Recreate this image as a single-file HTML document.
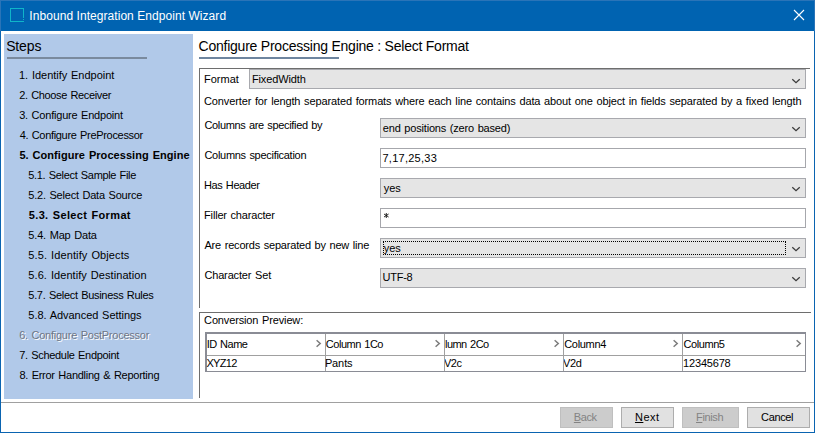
<!DOCTYPE html>
<html><head><meta charset="utf-8">
<style>
*{margin:0;padding:0;box-sizing:border-box}
html,body{width:815px;height:433px;overflow:hidden;background:#fff}
body{position:relative;font-family:"Liberation Sans",sans-serif;font-size:11px;color:#000}
.a{position:absolute}
.t{position:absolute;white-space:nowrap}
#tb{left:0;top:0;width:815px;height:31px;background:#0063b1}
#icon{left:10px;top:8px;width:14px;height:14px;border:1px solid #0fb5c9}
#close{left:793px;top:9px;width:12px;height:12px}
#steps{left:4px;top:34px;width:189px;height:365px;background:#b1c9e9}
#stepsu{left:7px;top:57px;width:140px;height:2px;background:#7a8a9e}
#phu{left:199px;top:57px;width:140px;height:2px;background:#6e859f}
.box{position:absolute;border-top:1px solid #6e6e6e;border-left:1px solid #6e6e6e}
.cb{position:absolute;height:20px;background:#e5e5e5;border:1px solid #a8a9ae}
.tx{position:absolute;height:20px;background:#fff;border:1px solid #a6a7ac}
.chev{position:absolute}
.hchev{position:absolute}
#tbl{left:205px;top:332px;width:601px;height:40px;border:1px solid #8a8c95;border-top:2px solid #8a8c95;border-left:2px solid #8a8c95}
.vl{position:absolute;width:1px;background:#a0a0a0}
.hl{position:absolute;height:1px;background:#a0a0a0}
.btn{position:absolute;top:407px;height:21px;background:#e1e1e1;border:1px solid #adadad}
.btn.dis{background:#cccccc;border-color:#bfbfbf}
u{text-decoration:underline;text-decoration-thickness:1px;text-underline-offset:1px}
.clip{position:absolute;overflow:hidden}

</style></head><body>
<div id="tb" class="a"></div>
<div class="a" style="left:0;top:0;width:1px;height:433px;background:#0a64b1"></div>
<div class="a" style="left:814px;top:0;width:1px;height:433px;background:#0a64b1"></div>
<div class="a" style="left:0;top:432px;width:815px;height:1px;background:#0a64b1"></div>
<div class="a" style="left:0;top:0;width:815px;height:1px;background:#2a74b8"></div>
<div class="a" style="left:0;top:0;width:1px;height:31px;background:#2a74b8"></div>
<div class="a" style="left:814px;top:0;width:1px;height:31px;background:#2a74b8"></div>
<svg class="a" style="left:10px;top:8px" width="14" height="14"><g fill="#0fb5c9"><rect x="0" y="0" width="14" height="1"/><rect x="0" y="0" width="1" height="14"/><rect x="0" y="13" width="14" height="1"/><rect x="13" y="0" width="1" height="10"/><rect x="13" y="11" width="1" height="1"/></g></svg>
<svg id="close" class="a" viewBox="0 0 12 12"><path d="M1 1L11 11M11 1L1 11" stroke="#fff" stroke-width="1.1"/></svg>

<div id="steps" class="a"></div>
<div id="stepsu" class="a"></div>
<div id="phu" class="a"></div>

<div class="box" style="left:199px;top:68px;width:611px;height:240px"></div>
<div class="cb" style="left:249px;top:69px;width:557px"></div>
<div class="cb" style="left:380px;top:118px;width:426px"></div>
<div class="tx" style="left:380px;top:148px;width:426px"></div>
<div class="cb" style="left:380px;top:178px;width:426px"></div>
<div class="tx" style="left:380px;top:208px;width:426px"></div>
<svg class="a" style="left:383px;top:212px" width="7" height="7" viewBox="0 0 7 7"><path d="M1 2L5.6 5M5.6 2L1 5M3.3 1V6" stroke="#111" stroke-width="0.9" fill="none"/></svg>
<div class="cb" style="left:380px;top:238px;width:426px"></div>
<div class="a" style="left:383px;top:241px;width:403px;height:14px;border:1px dotted #000"></div>
<div class="cb" style="left:380px;top:268px;width:426px"></div>

<svg class="chev" style="left:791px;top:77px" width="10" height="7" viewBox="0 0 10 7"><path d="M1.3 2.2L5 5.6L8.7 2.2" fill="none" stroke="#3a3a3a" stroke-width="1.25"/></svg>
<svg class="chev" style="left:791px;top:125px" width="10" height="7" viewBox="0 0 10 7"><path d="M1.3 2.2L5 5.6L8.7 2.2" fill="none" stroke="#3a3a3a" stroke-width="1.25"/></svg>
<svg class="chev" style="left:791px;top:185px" width="10" height="7" viewBox="0 0 10 7"><path d="M1.3 2.2L5 5.6L8.7 2.2" fill="none" stroke="#3a3a3a" stroke-width="1.25"/></svg>
<svg class="chev" style="left:791px;top:245px" width="10" height="7" viewBox="0 0 10 7"><path d="M1.3 2.2L5 5.6L8.7 2.2" fill="none" stroke="#3a3a3a" stroke-width="1.25"/></svg>
<svg class="chev" style="left:791px;top:275px" width="10" height="7" viewBox="0 0 10 7"><path d="M1.3 2.2L5 5.6L8.7 2.2" fill="none" stroke="#3a3a3a" stroke-width="1.25"/></svg>

<div class="box" style="left:199px;top:312px;width:612px;height:86px"></div>

<div id="tbl" class="a"></div>
<div class="hl" style="left:207px;top:355px;width:598px"></div>
<div class="vl" style="left:325px;top:334px;height:37px"></div>
<div class="vl" style="left:444px;top:334px;height:37px"></div>
<div class="vl" style="left:563px;top:334px;height:37px"></div>
<div class="vl" style="left:682px;top:334px;height:37px"></div>
<svg class="hchev" style="left:315px;top:339px" width="7" height="9" viewBox="0 0 7 9"><path d="M1.6 1.3L5.2 4.5L1.6 7.7" fill="none" stroke="#7c7c7c" stroke-width="1.5"/></svg>
<svg class="hchev" style="left:434px;top:339px" width="7" height="9" viewBox="0 0 7 9"><path d="M1.6 1.3L5.2 4.5L1.6 7.7" fill="none" stroke="#7c7c7c" stroke-width="1.5"/></svg>
<svg class="hchev" style="left:553px;top:339px" width="7" height="9" viewBox="0 0 7 9"><path d="M1.6 1.3L5.2 4.5L1.6 7.7" fill="none" stroke="#7c7c7c" stroke-width="1.5"/></svg>
<svg class="hchev" style="left:672px;top:339px" width="7" height="9" viewBox="0 0 7 9"><path d="M1.6 1.3L5.2 4.5L1.6 7.7" fill="none" stroke="#7c7c7c" stroke-width="1.5"/></svg>
<svg class="hchev" style="left:795px;top:339px" width="7" height="9" viewBox="0 0 7 9"><path d="M1.6 1.3L5.2 4.5L1.6 7.7" fill="none" stroke="#7c7c7c" stroke-width="1.5"/></svg>
<div class="clip" style="left:445px;top:356px;width:118px;height:15px"><div class="t" style="left:-1px;top:2px;font-size:11px;line-height:11px;letter-spacing:-0.5px">V2c</div></div>
<div class="clip" style="left:564px;top:356px;width:118px;height:15px"><div class="t" style="left:-1px;top:2px;font-size:11px;line-height:11px;letter-spacing:-0.4px">V2d</div></div>

<div class="a" style="left:1px;top:402px;width:813px;height:1px;background:#a0a0a0"></div>
<div class="btn dis" style="left:560px;width:53px"></div>
<div class="btn" style="left:621px;width:53px"></div>
<div class="btn dis" style="left:682px;width:57px"></div>
<div class="btn" style="left:747px;width:63px"></div>

<div id="ttl" class="t" style="left:29.36px;top:10px;font-size:12px;line-height:12px;font-weight:normal;color:#fff;letter-spacing:0.056px;word-spacing:0px;">Inbound Integration Endpoint Wizard</div>
<div id="stepsh" class="t" style="left:6.14px;top:39px;font-size:14px;line-height:14px;font-weight:normal;color:#000;letter-spacing:-0.126px;word-spacing:0px;">Steps</div>
<div id="s1" class="t" style="left:18.95px;top:70px;font-size:11px;line-height:11px;font-weight:normal;color:#000;letter-spacing:-0.021px;word-spacing:0.8px;">1. Identify Endpoint</div>
<div id="s2" class="t" style="left:19.26px;top:90px;font-size:11px;line-height:11px;font-weight:normal;color:#000;letter-spacing:-0.355px;word-spacing:0.8px;">2. Choose Receiver</div>
<div id="s3" class="t" style="left:19.15px;top:110px;font-size:11px;line-height:11px;font-weight:normal;color:#000;letter-spacing:-0.204px;word-spacing:0.8px;">3. Configure Endpoint</div>
<div id="s4" class="t" style="left:19.65px;top:130px;font-size:11px;line-height:11px;font-weight:normal;color:#000;letter-spacing:-0.319px;word-spacing:0.8px;">4. Configure PreProcessor</div>
<div id="s5" class="t" style="left:19.38px;top:150px;font-size:11px;line-height:11px;font-weight:bold;color:#000;letter-spacing:0.053px;word-spacing:0.8px;">5. Configure Processing Engine</div>
<div id="s51" class="t" style="left:28.33px;top:170px;font-size:11px;line-height:11px;font-weight:normal;color:#000;letter-spacing:-0.342px;word-spacing:0.8px;">5.1. Select Sample File</div>
<div id="s52" class="t" style="left:28.33px;top:190px;font-size:11px;line-height:11px;font-weight:normal;color:#000;letter-spacing:-0.208px;word-spacing:0.8px;">5.2. Select Data Source</div>
<div id="s53" class="t" style="left:28.76px;top:210px;font-size:11px;line-height:11px;font-weight:bold;color:#000;letter-spacing:0.354px;word-spacing:0.8px;">5.3. Select Format</div>
<div id="s54" class="t" style="left:28.33px;top:230px;font-size:11px;line-height:11px;font-weight:normal;color:#000;letter-spacing:-0.173px;word-spacing:0.8px;">5.4. Map Data</div>
<div id="s55" class="t" style="left:28.33px;top:250px;font-size:11px;line-height:11px;font-weight:normal;color:#000;letter-spacing:0.109px;word-spacing:0.8px;">5.5. Identify Objects</div>
<div id="s56" class="t" style="left:28.33px;top:270px;font-size:11px;line-height:11px;font-weight:normal;color:#000;letter-spacing:0.070px;word-spacing:0.8px;">5.6. Identify Destination</div>
<div id="s57" class="t" style="left:28.33px;top:290px;font-size:11px;line-height:11px;font-weight:normal;color:#000;letter-spacing:-0.314px;word-spacing:0.8px;">5.7. Select Business Rules</div>
<div id="s58" class="t" style="left:28.33px;top:310px;font-size:11px;line-height:11px;font-weight:normal;color:#000;letter-spacing:-0.044px;word-spacing:0.8px;">5.8. Advanced Settings</div>
<div id="s6" class="t" style="left:19.17px;top:330px;font-size:11px;line-height:11px;font-weight:normal;color:#6e7585;letter-spacing:-0.236px;word-spacing:0.8px;text-shadow:1px 1px 0 #fff;">6. Configure PostProcessor</div>
<div id="s7" class="t" style="left:19.22px;top:350px;font-size:11px;line-height:11px;font-weight:normal;color:#000;letter-spacing:-0.325px;word-spacing:0.8px;">7. Schedule Endpoint</div>
<div id="s8" class="t" style="left:19.40px;top:370px;font-size:11px;line-height:11px;font-weight:normal;color:#000;letter-spacing:-0.264px;word-spacing:0.8px;">8. Error Handling &amp; Reporting</div>
<div id="ph" class="t" style="left:198.54px;top:39px;font-size:14px;line-height:14px;font-weight:normal;color:#000;letter-spacing:-0.231px;word-spacing:0px;">Configure Processing Engine : Select Format</div>
<div id="lfmt" class="t" style="left:203.89px;top:74px;font-size:11px;line-height:11px;font-weight:normal;color:#000;letter-spacing:0.032px;word-spacing:0.8px;">Format</div>
<div id="vfmt" class="t" style="left:251.89px;top:74px;font-size:11px;line-height:11px;font-weight:normal;color:#000;letter-spacing:-0.108px;word-spacing:0.8px;">FixedWidth</div>
<div id="desc" class="t" style="left:204.03px;top:96px;font-size:11px;line-height:11px;font-weight:normal;color:#000;letter-spacing:-0.124px;word-spacing:0.8px;">Converter for length separated formats where each line contains data about one object in fields separated by a fixed length</div>
<div id="l1" class="t" style="left:204.40px;top:120px;font-size:11px;line-height:11px;font-weight:normal;color:#000;letter-spacing:-0.339px;word-spacing:0.8px;">Columns are specified by</div>
<div id="l2" class="t" style="left:204.40px;top:150px;font-size:11px;line-height:11px;font-weight:normal;color:#000;letter-spacing:-0.284px;word-spacing:0.8px;">Columns specification</div>
<div id="l3" class="t" style="left:204.09px;top:180px;font-size:11px;line-height:11px;font-weight:normal;color:#000;letter-spacing:-0.410px;word-spacing:0.8px;">Has Header</div>
<div id="l4" class="t" style="left:204.09px;top:210px;font-size:11px;line-height:11px;font-weight:normal;color:#000;letter-spacing:-0.179px;word-spacing:0.8px;">Filler character</div>
<div id="l5" class="t" style="left:204.47px;top:240px;font-size:11px;line-height:11px;font-weight:normal;color:#000;letter-spacing:-0.190px;word-spacing:0.8px;">Are records separated by new line</div>
<div id="l6" class="t" style="left:204.40px;top:270px;font-size:11px;line-height:11px;font-weight:normal;color:#000;letter-spacing:-0.150px;word-spacing:0.8px;">Character Set</div>
<div id="v1" class="t" style="left:382.77px;top:123px;font-size:11px;line-height:11px;font-weight:normal;color:#000;letter-spacing:-0.176px;word-spacing:0.8px;">end positions (zero based)</div>
<div id="v2" class="t" style="left:382.51px;top:153px;font-size:11px;line-height:11px;font-weight:normal;color:#000;letter-spacing:0.256px;word-spacing:0.8px;">7,17,25,33</div>
<div id="v3" class="t" style="left:383.76px;top:183px;font-size:11px;line-height:11px;font-weight:normal;color:#000;letter-spacing:-0.031px;word-spacing:0.8px;">yes</div>
<div id="v5" class="t" style="left:383.76px;top:243px;font-size:11px;line-height:11px;font-weight:normal;color:#000;letter-spacing:-0.031px;word-spacing:0.8px;">yes</div>
<div id="v6" class="t" style="left:382.52px;top:272px;font-size:11px;line-height:11px;font-weight:normal;color:#000;letter-spacing:-0.255px;word-spacing:0.8px;">UTF-8</div>
<div id="cp" class="t" style="left:204.09px;top:315px;font-size:11px;line-height:11px;font-weight:normal;color:#000;letter-spacing:-0.140px;word-spacing:0.8px;">Conversion Preview:</div>
<div id="h1" class="t" style="left:206.65px;top:339px;font-size:11px;line-height:11px;font-weight:normal;color:#000;letter-spacing:-0.476px;word-spacing:0.8px;">ID Name</div>
<div id="h2" class="t" style="left:325.86px;top:339px;font-size:11px;line-height:11px;font-weight:normal;color:#000;letter-spacing:-0.480px;word-spacing:0.8px;">Column 1Co</div>
<div id="h3" class="t" style="left:444.98px;top:339px;font-size:11px;line-height:11px;font-weight:normal;color:#000;letter-spacing:-0.525px;word-spacing:0.8px;">lumn 2Co</div>
<div id="h4" class="t" style="left:564.21px;top:339px;font-size:11px;line-height:11px;font-weight:normal;color:#000;letter-spacing:-0.307px;word-spacing:0.8px;">Column4</div>
<div id="h5" class="t" style="left:683.40px;top:339px;font-size:11px;line-height:11px;font-weight:normal;color:#000;letter-spacing:-0.408px;word-spacing:0.8px;">Column5</div>
<div id="d1" class="t" style="left:206.43px;top:358px;font-size:11px;line-height:11px;font-weight:normal;color:#000;letter-spacing:-0.696px;word-spacing:0.8px;">XYZ12</div>
<div id="d2" class="t" style="left:324.89px;top:358px;font-size:11px;line-height:11px;font-weight:normal;color:#000;letter-spacing:-0.105px;word-spacing:0.8px;">Pants</div>
<div id="d5" class="t" style="left:683.10px;top:358px;font-size:11px;line-height:11px;font-weight:normal;color:#000;letter-spacing:-0.190px;word-spacing:0.8px;">12345678</div>
<div id="bback" class="t" style="left:573.85px;top:412px;font-size:11px;line-height:11px;font-weight:normal;color:#838383;letter-spacing:-0.455px;word-spacing:0.8px;"><u>B</u>ack</div>
<div id="bnext" class="t" style="left:634.98px;top:412px;font-size:11px;line-height:11px;font-weight:normal;color:#000;letter-spacing:0.448px;word-spacing:0.8px;"><u>N</u>ext</div>
<div id="bfin" class="t" style="left:696.04px;top:412px;font-size:11px;line-height:11px;font-weight:normal;color:#838383;letter-spacing:-0.376px;word-spacing:0.8px;"><u>F</u>inish</div>
<div id="bcan" class="t" style="left:761.09px;top:412px;font-size:11px;line-height:11px;font-weight:normal;color:#000;letter-spacing:-0.364px;word-spacing:0.8px;">Cancel</div>
</body></html>
